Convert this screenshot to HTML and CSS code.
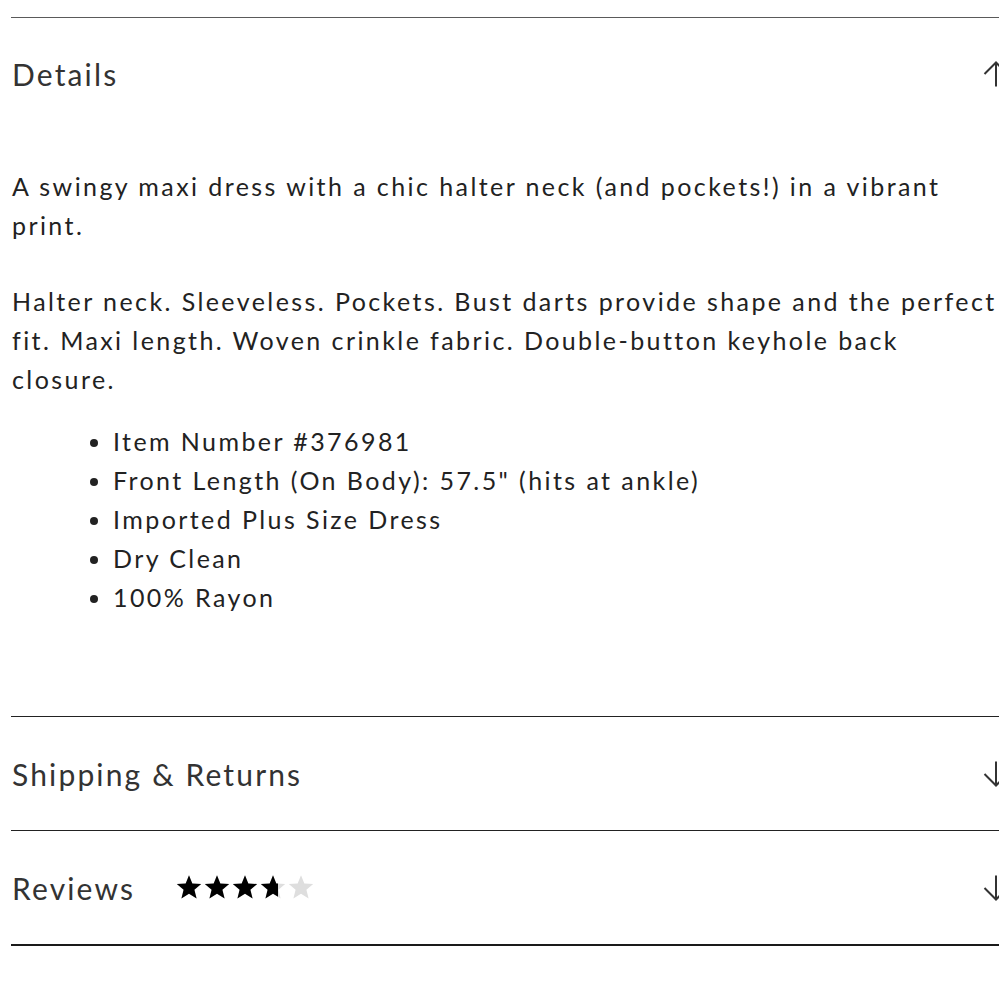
FILE: index.html
```html
<!DOCTYPE html>
<html lang="en">
<head>
<meta charset="utf-8">
<title>Product details</title>
<link rel="stylesheet" href="styles.css">
</head>
<body>
<div class="accordion">
  <section class="acc-item open">
    <div class="acc-head">
      <span class="acc-title">Details</span>
      <svg class="acc-icon" viewBox="0 0 26 26" aria-hidden="true"><path d="M13 1.5V25.5M1.5 13L13 1.5L24.5 13"/></svg>
    </div>
    <div class="acc-body">
      <p>A swingy maxi dress with a chic halter neck (and pockets!) in a vibrant print.</p>
      <p>Halter neck. Sleeveless. Pockets. Bust darts provide shape and the perfect fit. Maxi length. Woven crinkle fabric. Double-button keyhole back closure.</p>
      <ul>
        <li>Item Number #376981</li>
        <li>Front Length (On Body): 57.5" (hits at ankle)</li>
        <li>Imported Plus Size Dress</li>
        <li>Dry Clean</li>
        <li>100% Rayon</li>
      </ul>
    </div>
  </section>
  <section class="acc-item">
    <div class="acc-head">
      <span class="acc-title">Shipping &amp; Returns</span>
      <svg class="acc-icon" viewBox="0 0 26 26" aria-hidden="true"><path d="M13 0.5V24.5M1.5 13L13 24.5L24.5 13"/></svg>
    </div>
  </section>
  <section class="acc-item last">
    <div class="acc-head">
      <span class="acc-title">Reviews</span>
      <span class="rating">
        <span class="stars base">
          <svg viewBox="0 0 24 24"><path d="M12 .3l3.2 7.8 8.5.6-6.5 5.4 2.1 8.4L12 18l-7.3 4.5 2.1-8.4L.3 8.7l8.5-.6z"/></svg>
          <svg viewBox="0 0 24 24"><path d="M12 .3l3.2 7.8 8.5.6-6.5 5.4 2.1 8.4L12 18l-7.3 4.5 2.1-8.4L.3 8.7l8.5-.6z"/></svg>
          <svg viewBox="0 0 24 24"><path d="M12 .3l3.2 7.8 8.5.6-6.5 5.4 2.1 8.4L12 18l-7.3 4.5 2.1-8.4L.3 8.7l8.5-.6z"/></svg>
          <svg viewBox="0 0 24 24"><path d="M12 .3l3.2 7.8 8.5.6-6.5 5.4 2.1 8.4L12 18l-7.3 4.5 2.1-8.4L.3 8.7l8.5-.6z"/></svg>
          <svg viewBox="0 0 24 24"><path d="M12 .3l3.2 7.8 8.5.6-6.5 5.4 2.1 8.4L12 18l-7.3 4.5 2.1-8.4L.3 8.7l8.5-.6z"/></svg>
        </span>
        <span class="stars fill" style="width:74%">
          <svg viewBox="0 0 24 24"><path d="M12 .3l3.2 7.8 8.5.6-6.5 5.4 2.1 8.4L12 18l-7.3 4.5 2.1-8.4L.3 8.7l8.5-.6z"/></svg>
          <svg viewBox="0 0 24 24"><path d="M12 .3l3.2 7.8 8.5.6-6.5 5.4 2.1 8.4L12 18l-7.3 4.5 2.1-8.4L.3 8.7l8.5-.6z"/></svg>
          <svg viewBox="0 0 24 24"><path d="M12 .3l3.2 7.8 8.5.6-6.5 5.4 2.1 8.4L12 18l-7.3 4.5 2.1-8.4L.3 8.7l8.5-.6z"/></svg>
          <svg viewBox="0 0 24 24"><path d="M12 .3l3.2 7.8 8.5.6-6.5 5.4 2.1 8.4L12 18l-7.3 4.5 2.1-8.4L.3 8.7l8.5-.6z"/></svg>
          <svg viewBox="0 0 24 24"><path d="M12 .3l3.2 7.8 8.5.6-6.5 5.4 2.1 8.4L12 18l-7.3 4.5 2.1-8.4L.3 8.7l8.5-.6z"/></svg>
        </span>
      </span>
      <svg class="acc-icon" viewBox="0 0 26 26" aria-hidden="true"><path d="M13 0.5V24.5M1.5 13L13 24.5L24.5 13"/></svg>
    </div>
  </section>
</div>
</body>
</html>
```
FILE: styles.css
```css
html, body {
  margin: 0;
  padding: 0;
  background: #fff;
  overflow: hidden;
}
body {
  font-family: Lato, "DejaVu Sans", sans-serif;
  color: #222;
}
.accordion {
  margin: 17px 0 0 11px;
  width: 998px;
}
.acc-item {
  border-top: 1px solid #5a5a5a;
}
.acc-item + .acc-item {
  border-top-color: #222;
}
.acc-item.last {
  border-bottom: 2px solid #1a1a1a;
}
.acc-head {
  height: 113px;
  display: flex;
  align-items: center;
  padding-left: 1px;
}
.acc-item.open .acc-head {
  height: 111px;
}
.acc-title {
  font-size: 30px;
  color: #333;
  letter-spacing: 2.15px;
}
.acc-icon {
  width: 26px;
  height: 26px;
  margin-left: auto;
  fill: none;
  stroke: #333;
  stroke-width: 2;
}
.acc-body {
  padding: 38px 5px 99px 1px;
  font-size: 25px;
  line-height: 39px;
  letter-spacing: 2.42px;
}
.acc-body p {
  margin: 0 0 37px;
}
.acc-body ul {
  margin: -14px 0 0;
  padding-left: 101px;
}
.rating {
  position: relative;
  margin-left: 41px;
  display: inline-block;
  height: 25px;
}
.stars {
  display: flex;
  gap: 2px;
  white-space: nowrap;
}
.stars svg {
  flex: none;
  width: 26px;
  height: 25px;
}
.stars.base svg {
  fill: #dedede;
}
.stars.fill {
  position: absolute;
  top: 0;
  left: 0;
  overflow: hidden;
}
.stars.fill svg {
  fill: #000;
}
```
